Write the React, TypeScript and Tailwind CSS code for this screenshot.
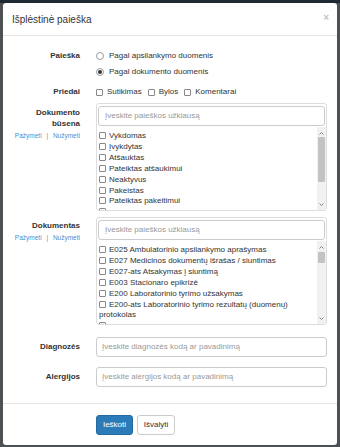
import type { ReactNode } from "react";

const font = { fontFamily: '"Liberation Sans", Arial, sans-serif' };

function Label({ children }: { children: ReactNode }) {
  return (
    <div className="w-[70px] shrink-0 text-right text-[8px] font-bold text-[#333]">
      {children}
    </div>
  );
}

function Links() {
  return (
    <div className="mt-[1px] text-right text-[6.5px] leading-[11px] text-[#4a8fd0]">
      Pažymeti <span className="mx-[3px] text-[#888]">|</span> Nužymeti
    </div>
  );
}

function Box() {
  return (
    <span className="mr-[3px] inline-block size-[7px] rounded-[1px] border border-[#888] bg-white align-[-1px]" />
  );
}

function Radio({ on }: { on?: boolean }) {
  return (
    <span className="mr-[5px] inline-flex size-[8px] items-center justify-center rounded-full border border-[#9a9a9a] bg-white">
      {on && <span className="size-[4px] rounded-full bg-[#333]" />}
    </span>
  );
}

function Chevron({ up }: { up?: boolean }) {
  return (
    <svg width="5" height="3" viewBox="0 0 5 3">
      <polyline
        points={up ? "0.5,2.5 2.5,0.5 4.5,2.5" : "0.5,0.5 2.5,2.5 4.5,0.5"}
        fill="none"
        stroke="#777"
        strokeWidth="0.9"
      />
    </svg>
  );
}

function Scrollbar({ thumbTop, thumbH }: { thumbTop: string; thumbH: string }) {
  return (
    <div className="flex w-[9px] shrink-0 flex-col items-center bg-[#f1f1f1]">
      <div className="mt-[5px] flex h-[3px] items-center">
        <Chevron up />
      </div>
      <div className={`w-[7px] rounded-[1px] bg-[#c3c3c3] ${thumbTop} ${thumbH}`} />
      <div className="mt-auto mb-[4px] flex h-[3px] items-center">
        <Chevron />
      </div>
    </div>
  );
}

function PickList({
  items,
  thumbTop,
  thumbH,
}: {
  items: string[];
  thumbTop: string;
  thumbH: string;
}) {
  return (
    <div className="h-[108px] rounded-[3px] border border-[#ddd] bg-white">
      <div className="mx-[1px] mt-[2px] flex h-[20px] items-center rounded-[3px] border border-[#ccc] px-[6px] text-[8px] text-[#999]">
        Įveskite paieškos užklausą
      </div>
      <div className="mt-[1px] flex h-[83px] overflow-hidden">
        <div className="flex-1 overflow-hidden pt-[4px] pl-[2px] text-[8px] leading-[10.9px] text-[#333]">
          {items.map((t) => (
            <div key={t}>
              <Box />
              {t}
            </div>
          ))}
          {/* next row, cut off by the list's height */}
          <div>
            <Box />
          </div>
        </div>
        <Scrollbar thumbTop={thumbTop} thumbH={thumbH} />
      </div>
    </div>
  );
}

export default function App() {
  return (
    <div
      className="h-[447px] w-[340px] overflow-hidden border-t-[3px] border-[#1f2933] bg-[#4d5154] pl-[3px]"
      style={font}
    >
      <div className="flex h-[442px] w-[334px] flex-col rounded-[3px] bg-white">
        <div className="flex h-[33px] shrink-0 items-center justify-between border-b border-[#e5e5e5] pt-[1px] pr-[8px] pl-[9px]">
          <span className="text-[10px] text-[#333]">Išplėstinė paieška</span>
          <span className="-mt-[5px] text-[10px] font-bold text-[#c4c4c4]">×</span>
        </div>

        <div className="pt-[12px] pr-[10px] pl-[7px]">
          <div className="flex gap-[16px] leading-[16px]">
            <Label>Paieška</Label>
            <div className="text-[8px] text-[#333]">
              <div className="flex items-center">
                <Radio />
                Pagal apsilankymo duomenis
              </div>
              <div className="flex items-center">
                <Radio on />
                Pagal dokumento duomenis
              </div>
            </div>
          </div>

          <div className="mt-[4px] flex gap-[16px] leading-[16px]">
            <Label>Priedai</Label>
            <div className="flex items-center text-[8px] text-[#333]">
              <Box />
              <span className="mr-[6px] ml-[1px]">Sutikimas</span>
              <Box />
              <span className="mr-[6px] ml-[1px]">Bylos</span>
              <Box />
              <span className="ml-[1px]">Komentarai</span>
            </div>
          </div>

          <div className="mt-[3px] flex gap-[16px]">
            <div className="w-[70px] shrink-0 pt-[4px]">
              <div className="text-right text-[8px] leading-[11px] font-bold text-[#333]">
                Dokumento
                <br />
                būsena
              </div>
              <Links />
            </div>
            <div className="w-[231px]">
              <PickList
                thumbTop="mt-[2px]"
                thumbH="h-[45px]"
                items={[
                  "Vykdomas",
                  "Įvykdytas",
                  "Atšauktas",
                  "Pateiktas atšaukimui",
                  "Neaktyvus",
                  "Pakeistas",
                  "Pateiktas pakeitimui",
                ]}
              />
            </div>
          </div>

          <div className="mt-[6px] flex gap-[16px]">
            <div className="w-[70px] shrink-0 pt-[3px]">
              <div className="text-right text-[8px] leading-[11px] font-bold text-[#333]">
                Dokumentas
              </div>
              <Links />
            </div>
            <div className="w-[231px]">
              <PickList
                thumbTop="mt-[3px]"
                thumbH="h-[11px]"
                items={[
                  "E025 Ambulatorinio apsilankymo aprašymas",
                  "E027 Medicinos dokumentų išrašas / siuntimas",
                  "E027-ats Atsakymas į siuntimą",
                  "E003 Stacionaro epikrizė",
                  "E200 Laboratorinio tyrimo užsakymas",
                  "E200-ats Laboratorinio tyrimo rezultatų (duomenų) protokolas",
                ]}
              />
            </div>
          </div>

          <div className="mt-[12px] flex items-center gap-[16px]">
            <Label>Diagnozės</Label>
            <div className="flex h-[20px] w-[231px] items-center rounded-[3px] border border-[#ccc] px-[5px] text-[8px] text-[#999]">
              Įveskite diagnozės kodą ar pavadinimą
            </div>
          </div>

          <div className="mt-[10px] flex items-center gap-[16px]">
            <Label>Alergijos</Label>
            <div className="flex h-[20px] w-[231px] items-center rounded-[3px] border border-[#ccc] px-[5px] text-[8px] text-[#999]">
              Įveskite alergijos kodą ar pavadinimą
            </div>
          </div>
        </div>

        <div className="mt-[16px] flex border-t border-[#e5e5e5] pt-[11px] pl-[93px]">
          <button className="h-[20px] w-[37px] rounded-[3px] border border-[#2469a0] bg-[#2b7bb9] text-[8px] text-white">
            Ieškoti
          </button>
          <button className="ml-[4px] h-[20px] w-[38px] rounded-[3px] border border-[#ccc] bg-white text-[8px] text-[#333]">
            Išvalyti
          </button>
        </div>
      </div>
    </div>
  );
}
